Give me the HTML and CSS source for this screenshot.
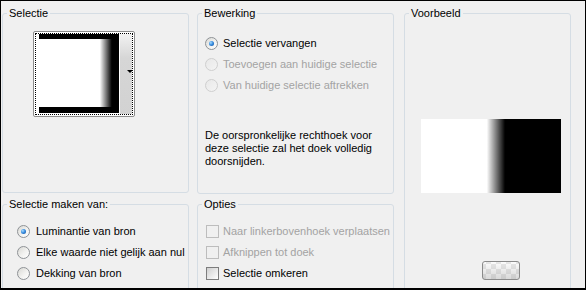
FILE: index.html
```html
<!DOCTYPE html>
<html lang="nl">
<head>
<meta charset="utf-8">
<title>Selectie</title>
<link rel="stylesheet" href="styles.css">
</head>
<body>
<div class="dialog">
  <div class="col col-left">
    <fieldset class="group g-selectie">
      <legend>Selectie</legend>
      <div class="swatch">
        <div class="swatch-focus">
          <div class="swatch-img"><div class="swatch-shape"></div></div>
          <div class="swatch-drop"><span class="tri"></span></div>
        </div>
      </div>
    </fieldset>
    <fieldset class="group g-bron">
      <legend>Selectie maken van:</legend>
      <div class="rows rows-bron">
        <div class="opt"><span class="radio checked"></span>Luminantie van bron</div>
        <div class="opt"><span class="radio"></span>Elke waarde niet gelijk aan nul</div>
        <div class="opt"><span class="radio"></span>Dekking van bron</div>
      </div>
    </fieldset>
  </div>
  <div class="col col-mid">
    <fieldset class="group g-bewerking">
      <legend>Bewerking</legend>
      <div class="rows rows-bewerking">
        <div class="opt"><span class="radio checked"></span>Selectie vervangen</div>
        <div class="opt disabled"><span class="radio"></span>Toevoegen aan huidige selectie</div>
        <div class="opt disabled"><span class="radio"></span>Van huidige selectie aftrekken</div>
      </div>
      <p class="note">De oorspronkelijke rechthoek voor deze selectie zal het doek volledig doorsnijden.</p>
    </fieldset>
    <fieldset class="group g-opties">
      <legend>Opties</legend>
      <div class="rows rows-opties">
        <div class="opt disabled"><span class="check"></span>Naar linkerbovenhoek verplaatsen</div>
        <div class="opt disabled"><span class="check"></span>Afknippen tot doek</div>
        <div class="opt"><span class="check"></span>Selectie omkeren</div>
      </div>
    </fieldset>
  </div>
  <div class="col col-right">
    <fieldset class="group g-voorbeeld">
      <legend>Voorbeeld</legend>
      <div class="preview"></div>
      <div class="bg-button"></div>
    </fieldset>
  </div>
</div>
</body>
</html>
```

FILE: styles.css
```css
html, body {
  margin: 0;
  padding: 0;
}
body {
  width: 586px;
  height: 290px;
  box-sizing: border-box;
  border: 1px solid #000;
  border-bottom-width: 2px;
  background: #f0f0f0;
  overflow: hidden;
  font-family: "Liberation Sans", Arial, sans-serif;
  font-size: 11px;
  line-height: 13px;
  color: #000;
}
.dialog {
  display: flex;
  padding: 6px 0 0 1px;
  gap: 8px;
}
.col {
  display: flex;
  flex-direction: column;
}
.col-left { width: 187px; gap: 5px; }
.col-mid { width: 197px; gap: 4px; }
.col-right { width: 167px; margin-left: 2px; }

.group {
  margin: 0;
  padding: 0;
  min-width: 0;
  border: 1px solid #d5dde4;
  border-radius: 3px;
  box-sizing: border-box;
}
.group legend {
  margin-left: 4px;
  padding: 0 2px;
  line-height: 13px;
  white-space: nowrap;
}
.g-selectie { height: 186px; }
.g-bewerking { height: 187px; }
.g-bron, .g-opties { height: 120px; }
.g-voorbeeld { height: 300px; }

/* swatch */
.swatch {
  margin: 11px 0 0 30px;
  width: 102px;
  height: 86px;
  box-sizing: border-box;
  border: 1px solid #8c8c8c;
  border-radius: 2px;
  padding: 1px;
  background: #fff;
}
.swatch-focus {
  height: 100%;
  box-sizing: border-box;
  border: 1px dotted #000;
  display: flex;
  background: #fff;
}
.swatch-img {
  flex: 1;
  padding-left: 3px;
}
.swatch-shape {
  width: 80px;
  height: 79px;
  box-sizing: border-box;
  border-top: 5px solid #000;
  border-bottom: 6px solid #000;
  background: linear-gradient(to right, #fff 0, #fff 76%, #000 91%, #000 100%);
}
.swatch-drop {
  width: 12px;
  background: linear-gradient(to bottom, #f2f2f2, #d6d6d6 30%, #d2d2d2);
  position: relative;
}
.tri {
  position: absolute;
  left: 7px;
  top: 36px;
  width: 0;
  height: 0;
  border-left: 3px solid transparent;
  border-right: 3px solid transparent;
  border-top: 3px solid #000;
}

/* rows */
.rows {
  display: flex;
  flex-direction: column;
}
.opt {
  height: 21px;
  display: flex;
  align-items: center;
  white-space: nowrap;
}
.opt.disabled { color: #a3a3a3; }
.rows-bewerking { margin: 13px 0 0 7px; }
.rows-bron { margin: 10px 0 0 14px; }
.rows-bron .opt { gap: 6px; }
.rows-bewerking .opt { gap: 5px; }
.rows-opties { margin: 10px 0 0 8px; }
.rows-opties .opt { gap: 4px; }

.radio {
  width: 13px;
  height: 13px;
  box-sizing: border-box;
  border-radius: 50%;
  border: 1px solid #8e9296;
  background: linear-gradient(135deg, #d8d8d4 0%, #f2f2f0 55%, #fff 100%);
  position: relative;
  flex: none;
}
.radio.checked::after {
  content: "";
  position: absolute;
  left: 3px;
  top: 3px;
  width: 5px;
  height: 5px;
  border-radius: 50%;
  background: radial-gradient(circle at 35% 35%, #a8dcff 0, #3a8ee0 45%, #0b4a9a 100%);
}
.disabled .radio {
  border-color: #cfcfcf;
  background: linear-gradient(135deg, #e8e8e8, #f4f4f4);
}
.check {
  width: 13px;
  height: 13px;
  box-sizing: border-box;
  border: 1px solid #7d7d7d;
  background: linear-gradient(135deg, #cfcfcf 0%, #ececec 60%, #fff 100%);
  flex: none;
}
.disabled .check {
  border-color: #bdbdbd;
  background: #f0f0f0;
}

.note {
  margin: 33px 0 0 7px;
  width: 180px;
}

/* preview */
.preview {
  margin: 99px 0 0 16px;
  width: 140px;
  height: 74px;
  background: linear-gradient(to right, #fff 0, #fff 47%, #000 60%, #000 100%);
}
.bg-button {
  margin: 68px 0 0 77px;
  width: 38px;
  height: 19px;
  box-sizing: border-box;
  border: 1px solid #8a8a8a;
  border-radius: 3px;
  background:
    linear-gradient(to bottom, rgba(255,255,255,0.35), rgba(190,190,190,0.55)),
    repeating-conic-gradient(#d9d9d9 0 25%, #fafafa 0 50%) 3px 2px / 10px 10px;
}
```
